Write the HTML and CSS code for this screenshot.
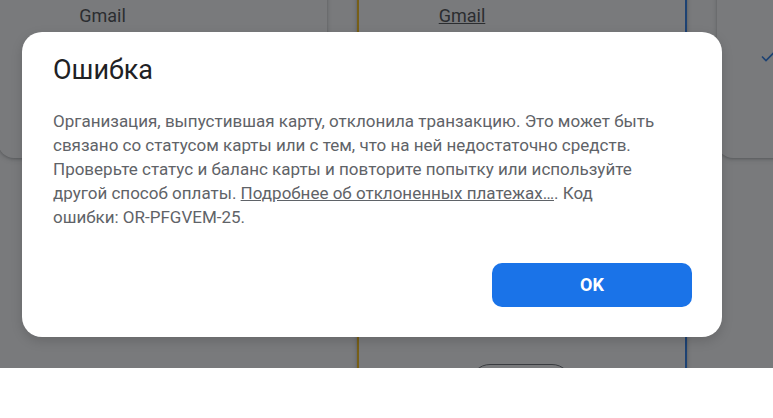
FILE: index.html
```html
<!DOCTYPE html>
<html lang="ru">
<head>
<meta charset="utf-8">
<link rel="stylesheet" href="styles.css">
</head>
<body>
<div class="stage">
  <div class="cards">
    <div class="card card-a">
      <span class="mail">Gmail</span>
    </div>
    <div class="card card-b">
      <span class="mail link">Gmail</span>
      <span class="pill"></span>
    </div>
    <div class="card card-c">
      <svg class="check" width="16" height="16" viewBox="0 0 16 16"><path d="M2 7.5 L6 11.5 L14 3.5" fill="none" stroke="#1a73e8" stroke-width="1.6"/></svg>
    </div>
  </div>
  <div class="overlay">
    <div class="dialog">
      <h1 class="title">Ошибка</h1>
      <p class="msg">Организация, выпустившая карту, отклонила транзакцию. Это может быть связано со статусом карты или с тем, что на ней недостаточно средств. Проверьте статус и баланс карты и повторите попытку или используйте другой способ оплаты. <a class="more" href="#">Подробнее об отклоненных платежах…</a>. Код ошибки:&nbsp;OR-PFGVEM-25.</p>
      <div class="actions">
        <button class="ok">OK</button>
      </div>
    </div>
  </div>
</div>
</body>
</html>
```
FILE: styles.css
```css
* { box-sizing: border-box; }
html, body { margin: 0; padding: 0; background: #fff; }
body { font-family: Roboto, "Noto Sans", Arial, sans-serif; width: 773px; height: 418px; overflow: hidden; }

.stage { position: relative; height: 368px; overflow: hidden; background: #fff; }

.cards { display: flex; align-items: flex-start; margin-top: -40px; }
.card { background: #fff; border-radius: 16px; box-shadow: 0 1px 3px rgba(60,64,67,0.35), 0 2px 6px rgba(60,64,67,0.15); flex: none; position: relative; }
.card-a { width: 329px; height: 198px; margin-left: -2px; display: flex; justify-content: center; }
.card-a .mail { margin-left: -120px; }
.card-b { width: 330px; height: 460px; margin-left: 30px; border-left: 2px solid #fbbc04; border-right: 2px solid #1a73e8; display: flex; justify-content: center; }
.card-b .mail { margin-left: -120px; }
.card-c { width: 120px; height: 198px; margin-left: 30px; }
.mail { margin-top: 46px; font-size: 18px; line-height: 20px; color: #3c4043; height: 20px; }
.link { text-decoration: underline; }
.pill { position: absolute; left: 111px; top: 404px; width: 102px; height: 40px; border: 1px solid #5f6368; border-radius: 20px; }
.check { position: absolute; left: 43px; top: 89px; }

.overlay { position: absolute; inset: 0; background: rgba(32,33,36,0.6); display: flex; align-items: center; padding-left: 22px; }
.dialog { width: 700px; height: 305px; background: #fff; border-radius: 20px; padding: 20px 30px 30px 31px; box-shadow: 0 4px 12px rgba(0,0,0,0.15); display: flex; flex-direction: column; }
.title { margin: 0; font-size: 27px; line-height: 36px; font-weight: 400; color: #202124; }
.msg { margin: 21px 0 0; max-width: 634px; font-size: 17px; line-height: 24px; color: #5f6368; }
.more { color: #5f6368; text-decoration: underline; }
.actions { margin-top: auto; display: flex; justify-content: flex-end; }
.ok { width: 200px; height: 44px; border: none; border-radius: 10px; background: #1a73e8; color: #fff; font-family: Roboto, Arial, sans-serif; font-size: 18px; font-weight: 700; }
```
